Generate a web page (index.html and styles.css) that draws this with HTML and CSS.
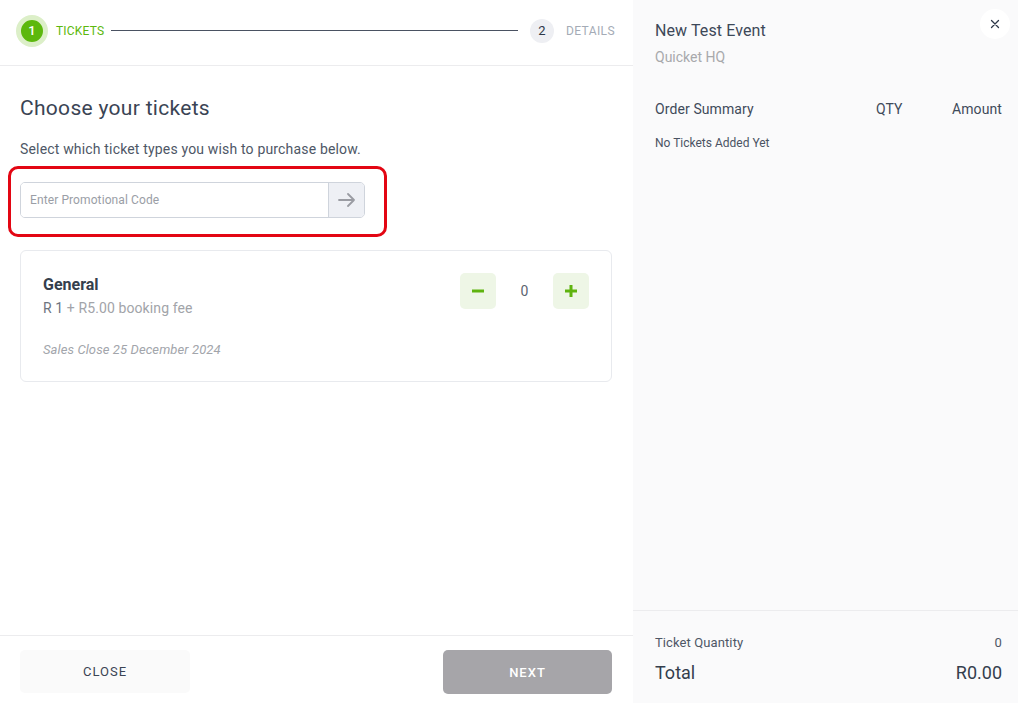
FILE: index.html
```html
<!DOCTYPE html>
<html lang="en">
<head>
    <meta charset="UTF-8">
    <title>Tickets</title>
    <link rel="stylesheet" href="styles.css">
</head>
<body>
    <div class="modal">
        <section class="main">
            <header class="stepper">
                <div class="step active">
                    <span class="step-num">1</span>
                    <span class="step-label">Tickets</span>
                </div>
                <div class="step-line"></div>
                <div class="step">
                    <span class="step-num">2</span>
                    <span class="step-label">Details</span>
                </div>
            </header>

            <div class="content">
                <h1 class="title">Choose your tickets</h1>
                <p class="subtitle">Select which ticket types you wish to purchase below.</p>

                <div class="promo-highlight">
                    <div class="promo">
                        <input class="promo-input" type="text" placeholder="Enter Promotional Code">
                        <button class="promo-btn">
                            <svg width="18" height="14" viewBox="0 0 18 14"><path d="M1 7h15M10 1l6 6-6 6" fill="none" stroke="#9a9ca3" stroke-width="1.8" stroke-linecap="round" stroke-linejoin="round"/></svg>
                        </button>
                    </div>
                </div>

                <div class="ticket">
                    <div class="ticket-top">
                        <div>
                            <div class="ticket-name">General</div>
                            <div class="ticket-price"><span class="price">R 1</span> + R5.00 booking fee</div>
                        </div>
                        <div class="qty">
                            <button class="qty-btn">
                                <svg width="12" height="12" viewBox="0 0 12 12"><rect x="0" y="4.5" width="12" height="3" fill="#5fb30f"/></svg>
                            </button>
                            <span class="qty-num">0</span>
                            <button class="qty-btn">
                                <svg width="12" height="12" viewBox="0 0 12 12"><rect x="0" y="4.5" width="12" height="3" fill="#5fb30f"/><rect x="4.5" y="0" width="3" height="12" fill="#5fb30f"/></svg>
                            </button>
                        </div>
                    </div>
                    <div class="ticket-close">Sales Close 25 December 2024</div>
                </div>
            </div>

            <footer class="actions">
                <button class="btn-close">Close</button>
                <button class="btn-next">Next</button>
            </footer>
        </section>

        <aside class="summary">
            <button class="x-btn">
                <svg width="10" height="10" viewBox="0 0 10 10"><path d="M1.5 1.5l7 7M8.5 1.5l-7 7" stroke="#2d3748" stroke-width="1.3" stroke-linecap="round"/></svg>
            </button>
            <div class="summary-body">
                <h2 class="event-name">New Test Event</h2>
                <div class="venue">Quicket HQ</div>

                <div class="summary-head">
                    <span class="col-name">Order Summary</span>
                    <span class="col-qty">QTY</span>
                    <span class="col-amount">Amount</span>
                </div>
                <div class="empty">No Tickets Added Yet</div>
            </div>
            <div class="totals">
                <div class="row-qty">
                    <span>Ticket Quantity</span>
                    <span>0</span>
                </div>
                <div class="row-total">
                    <span>Total</span>
                    <span>R0.00</span>
                </div>
            </div>
        </aside>
    </div>
</body>
</html>
```

FILE: styles.css
```css
* {
    margin: 0;
    padding: 0;
    box-sizing: border-box;
}

body {
    font-family: Roboto, "Liberation Sans", sans-serif;
    background: #fff;
    color: #3d4756;
}

button {
    font-family: inherit;
    border: none;
    cursor: pointer;
}

.modal {
    display: flex;
    width: 1018px;
    height: 703px;
}

/* left side */
.main {
    width: 633px;
    display: flex;
    flex-direction: column;
    background: #fff;
}

.stepper {
    height: 66px;
    border-bottom: 1px solid #ececee;
    display: flex;
    align-items: center;
    padding: 0 18px 4px 16px;
}

.step {
    display: flex;
    align-items: center;
}

.step-num {
    width: 24px;
    height: 24px;
    border-radius: 50%;
    background: #eeeff3;
    color: #2d3748;
    font-size: 13px;
    display: flex;
    align-items: center;
    justify-content: center;
}

.step.active .step-num {
    width: 32px;
    height: 32px;
    background: #5cb80d;
    color: #fff;
    font-weight: 500;
    border: 5px solid #dcefc8;
}

.step-label {
    font-size: 12px;
    text-transform: uppercase;
    color: #a4abb6;
    margin-left: 12px;
    letter-spacing: 0.4px;
}

.step.active .step-label {
    color: #5cb80d;
    margin-left: 8px;
    letter-spacing: 0.2px;
}

.step-line {
    flex: 1;
    height: 1px;
    background: #4a5262;
    margin: 0 12px 0 7px;
}

.content {
    flex: 1;
    padding: 30px 20px 0 20px;
}

.title {
    font-size: 21px;
    font-weight: 400;
    letter-spacing: 0.3px;
    color: #3a4454;
}

.subtitle {
    font-size: 14px;
    letter-spacing: 0.17px;
    color: #4e5766;
    margin-top: 21px;
}

.promo-highlight {
    width: 379px;
    height: 71px;
    margin: 9px 0 0 -12px;
    border: 3px solid #e30613;
    border-radius: 10px;
    padding: 13px 0 0 9px;
}

.promo {
    display: flex;
    width: 345px;
    height: 36px;
    border: 1px solid #cfd4dc;
    border-radius: 5px;
    overflow: hidden;
}

.promo-input {
    flex: 1;
    border: none;
    outline: none;
    padding: 0 9px;
    font-family: inherit;
    font-size: 12px;
    letter-spacing: 0.1px;
    color: #4a5568;
}

.promo-input::placeholder {
    color: #9a9ea6;
}

.promo-btn {
    width: 36px;
    background: #eef0f5;
    border-left: 1px solid #cfd4dc;
    display: flex;
    align-items: center;
    justify-content: center;
}

.ticket {
    width: 592px;
    margin-top: 13px;
    border: 1px solid #e8eaee;
    border-radius: 6px;
    padding: 22px 22px 24px 22px;
}

.ticket-top {
    display: flex;
    justify-content: space-between;
}

.ticket-name {
    font-size: 16px;
    font-weight: 700;
    color: #353f4d;
    margin-top: 2px;
}

.ticket-price {
    font-size: 14px;
    letter-spacing: 0.1px;
    color: #a2a4a9;
    margin-top: 6px;
}

.ticket-price .price {
    color: #6c7480;
}

.qty {
    display: flex;
    align-items: center;
    height: 36px;
}

.qty-btn {
    width: 36px;
    height: 36px;
    background: #eef6e6;
    border-radius: 5px;
    display: flex;
    align-items: center;
    justify-content: center;
}

.qty-num {
    width: 57px;
    text-align: center;
    font-size: 14px;
    color: #5c6470;
}

.ticket-close {
    font-size: 13px;
    font-style: italic;
    letter-spacing: 0.1px;
    color: #a2a5ab;
    margin-top: 26px;
}

.actions {
    height: 68px;
    border-top: 1px solid #ececee;
    display: flex;
    justify-content: space-between;
    align-items: flex-start;
    padding: 14px 21px 0 20px;
}

.btn-close {
    width: 170px;
    height: 43px;
    background: #fafafa;
    border-radius: 5px;
    font-size: 13px;
    letter-spacing: 1px;
    text-transform: uppercase;
    color: #3a4454;
}

.btn-next {
    width: 169px;
    height: 44px;
    background: #a6a5a9;
    border-radius: 5px;
    font-size: 13px;
    letter-spacing: 1px;
    text-transform: uppercase;
    color: #fff;
    font-weight: 500;
}

/* right side */
.summary {
    position: relative;
    flex: 1;
    background: #fafafb;
    display: flex;
    flex-direction: column;
}

.x-btn {
    position: absolute;
    top: 9px;
    right: 8px;
    width: 30px;
    height: 30px;
    border-radius: 50%;
    background: #fff;
    display: flex;
    align-items: center;
    justify-content: center;
}

.summary-body {
    flex: 1;
    padding: 21px 16px 0 22px;
}

.event-name {
    font-size: 16px;
    font-weight: 400;
    letter-spacing: 0.1px;
    color: #3d4858;
}

.venue {
    font-size: 14px;
    color: #a8a9ac;
    margin-top: 9px;
}

.summary-head {
    display: flex;
    font-size: 14px;
    letter-spacing: 0.1px;
    color: #3f4a5a;
    margin-top: 36px;
}

.col-name {
    flex: 1;
}

.col-qty {
    width: 74px;
}

.col-amount {
    width: 52px;
    text-align: right;
}

.empty {
    font-size: 12px;
    color: #4a5363;
    margin-top: 19px;
}

.totals {
    height: 93px;
    border-top: 1px solid #ececee;
    padding: 24px 16px 0 22px;
}

.row-qty,
.row-total {
    display: flex;
    justify-content: space-between;
}

.row-qty {
    font-size: 13px;
    letter-spacing: 0.1px;
    color: #4e5766;
}

.row-total {
    font-size: 18px;
    color: #343e4d;
    margin-top: 12px;
}
```
